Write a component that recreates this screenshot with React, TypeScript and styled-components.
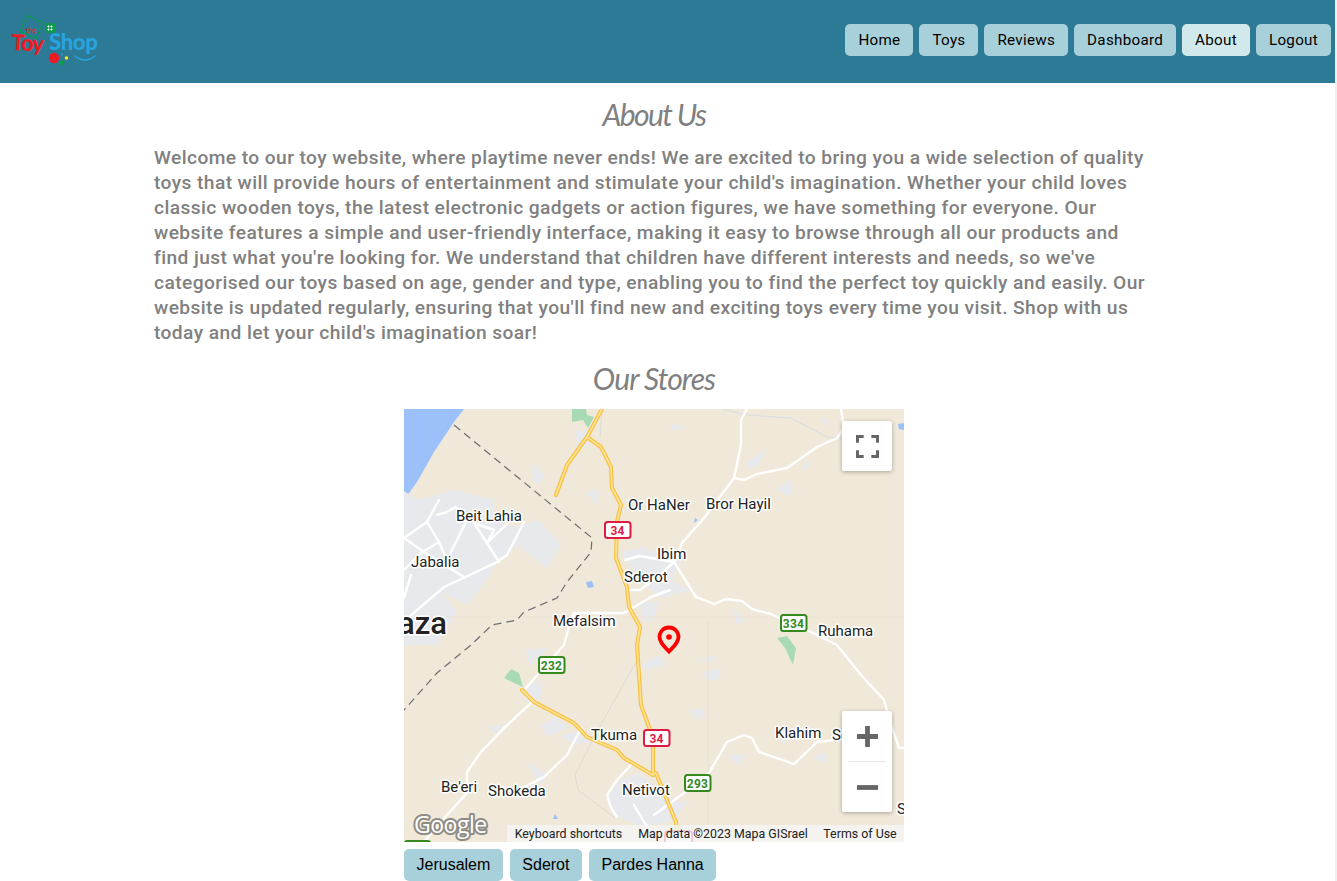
import { createGlobalStyle, styled } from 'styled-components'

const GlobalStyle = createGlobalStyle`
  html {
    background: #f1f1f1;
    overflow: hidden;
    height: 100%;
  }

  body {
    margin: 0;
    width: 1335px;
    height: 881px;
    overflow: hidden;
    background: #fff;
  }
`

const Header = styled.header`
  display: flex;
  align-items: center;
  justify-content: space-between;
  height: 83px;
  padding: 0 4px 0 8px;
  background: #2c7a96;
`

const Nav = styled.nav`
  display: flex;
  gap: 6px;
  margin-top: -3px;
`

const NavButton = styled.a<{ $active?: boolean }>`
  display: flex;
  align-items: center;
  height: 32px;
  padding: 0 13px;
  border-radius: 5px;
  background: ${(p) => (p.$active ? '#d2e9ec' : '#a8d0da')};
  color: #000;
  font: 400 15.2px Roboto, sans-serif;
  letter-spacing: 0.28px;
`

const Main = styled.main`
  display: flex;
  flex-direction: column;
  align-items: center;
  padding-right: 27px;
  color: #808080;
`

const Title = styled.h2<{ $spacing: number }>`
  margin: 11px 0 0;
  height: 40px;
  font: italic 400 30px/40px Lato, sans-serif;
  letter-spacing: ${(p) => p.$spacing}px;
`

const StoresTitle = styled(Title)`
  margin-top: 13px;
`

const Intro = styled.p`
  width: 1000px;
  margin: 11px 0 0;
  font: 500 19.2px/25px Roboto, sans-serif;
  letter-spacing: 0.41px;
`

const MapBox = styled.div`
  position: relative;
  width: 500px;
  height: 433px;
  margin-top: 11px;
  overflow: hidden;
  background: #f0e9d9;
`

const MapArt = styled.svg`
  display: block;
  width: 500px;
  height: 433px;
`

const MapControl = styled.div`
  position: absolute;
  right: 12px;
  display: flex;
  flex-direction: column;
  align-items: center;
  width: 50px;
  background: #fff;
  border-radius: 2px;
  box-shadow: 0 1px 4px rgba(0, 0, 0, 0.3);
`

const FullscreenControl = styled(MapControl)`
  top: 12px;
  height: 50px;
  justify-content: center;
`

const ZoomControl = styled(MapControl)`
  top: 302px;
  height: 101px;
`

const ZoomDivider = styled.div`
  width: 37px;
  height: 1px;
  background: #e6e6e6;
`

const ZoomButton = styled.div`
  display: flex;
  align-items: center;
  justify-content: center;
  width: 50px;
  height: 50px;
`

const Attribution = styled.div`
  position: absolute;
  right: 0;
  bottom: 0;
  display: flex;
  height: 17px;
  background: rgba(245, 245, 245, 0.75);
  color: #222;
  font: 12.4px/17px Roboto, sans-serif;
`

const AttributionItem = styled.span<{ $w: number }>`
  width: ${(p) => p.$w}px;
  text-align: center;
  white-space: nowrap;
`

const Stores = styled.div`
  display: flex;
  gap: 7px;
  width: 500px;
  margin-top: 7px;
`

const StoreButton = styled.button`
  height: 32px;
  padding: 0 12.5px;
  border: 0;
  border-radius: 5px;
  background: #a8d0da;
  color: #000;
  font: 16px "Liberation Sans", Arial, sans-serif;
`

const Label = styled.text<{ $size?: number; $weight?: number }>`
  font-family: Roboto, sans-serif;
  font-size: ${(p) => p.$size ?? 15}px;
  font-weight: ${(p) => p.$weight ?? 400};
  fill: #222;
  stroke: #fff;
  stroke-width: 3px;
  stroke-linejoin: round;
  paint-order: stroke;
`

const ShieldText = styled.text<{ $c: string }>`
  font-family: Roboto, sans-serif;
  font-size: 12px;
  font-weight: 700;
  letter-spacing: 0.2px;
  text-anchor: middle;
  fill: ${(p) => p.$c};
`

const GoogleMark = styled.text`
  font-family: "Open Sans", sans-serif;
  font-size: 23px;
  font-weight: 400;
  letter-spacing: -0.5px;
  fill: #fff;
  stroke: #8f8b85;
  stroke-width: 4px;
  stroke-linejoin: round;
  paint-order: stroke;
`

const LogoWord = styled.text<{ $c: string; $size: number; $spacing: number }>`
  font-family: Lato, sans-serif;
  font-size: ${(p) => p.$size}px;
  font-weight: 900;
  letter-spacing: ${(p) => p.$spacing}px;
  fill: ${(p) => p.$c};
`

const LogoTiny = styled.text`
  font-family: Lato, sans-serif;
  font-size: 7px;
  font-weight: 700;
  fill: #ed1c24;
`

const urban = [
  '404,491 418,500 453,490 494,500 494,518 514,527 539,520 561,545 547,568 517,545 497,562 481,588 467,605 441,592 457,612 437,645 404,645',
  '621,552 642,547 654,552 680,560 672,580 690,590 660,598 640,580',
  '607,796 620,780 638,773 654,785 682,805 668,822 640,826 615,815',
  '640,602 660,602 652,622 642,618',
]

const patches = [
  '532,462 544,476 539,485 533,480',
  '585,492 599,490 597,505',
  '575,431 590,430 590,447 578,447',
  '672,424 684,427 672,431',
  '747,462 767,449 757,466 748,469',
  '775,490 791,480 791,496',
  '801,470 810,458 808,469',
  '820,416 828,420 828,430',
  '732,608 745,620 736,624',
  '695,660 718,655 712,662',
  '730,697 746,688 731,696',
  '690,707 702,720 694,718',
  '727,755 746,755 737,765',
  '812,758 826,752 826,763',
  '525,650 548,648 530,666',
  '540,726 556,717 568,728 548,736',
  '560,736 580,730 592,742 575,745',
  '527,762 548,775 540,785',
  '490,727 503,724 494,735',
  '640,665 660,655 665,665 645,670',
  '704,672 720,668 718,680 706,680',
  '690,710 704,708 705,718',
  '775,735 782,722 786,745',
  '670,805 688,800 676,818',
  '520,690 540,680 542,695 528,704',
]

const whiteRoads = [
  'M674,562 696,597 714,604 726,599 742,601 752,609 771,614 787,622 811,632 837,645 861,675 884,700 891,725 899,748 904,748',
  'M674,562 682,543 704,518 734,478 741,445 741,420 747,409',
  'M734,478 744,480 757,474 787,468 817,447 837,438 844,428 841,409',
  'M654,815 684,793 709,773 727,742 744,735 752,738 759,752 794,764 817,742 844,739',
  'M564,645 539,673 526,688',
  'M564,645 570,622 574,613 604,613 624,613 651,597 670,590',
  'M532,702 504,728 481,752 467,772 467,793 447,815 424,842',
  'M579,732 567,755 544,777 524,787 505,790',
  'M631,765 617,780 607,795 611,808 617,817',
  'M634,805 644,822 650,830',
  'M625,560 640,556 674,562 660,575 640,590 627,590',
  'M439,500 427,522 404,538',
  'M427,522 439,542 421,553 404,570',
  'M439,542 447,560',
  'M437,515 447,512 456,507 467,520 447,560',
  'M474,523 494,530 487,543',
  'M474,523 487,543 499,562',
  'M524,522 507,555 497,562 474,573 444,587 417,610 404,622',
  'M404,538 424,552 464,577',
  'M411,575 404,598',
  'M487,543 507,524',
]

const mainHighways = [
  'M602,409 587,437 567,465 556,495',
  'M587,437 601,447 611,467 612,488 621,505 617,522 616,558 627,587 629,607 640,627 637,645 641,705 653,738 653,775 656,773 669,805 676,822 679,842',
  'M522,690 534,702 574,723 587,737 617,750 624,758 653,775',
]

const shields = [
  { x: 604, y: 521, label: '34', color: '#dd1c46' },
  { x: 643, y: 729, label: '34', color: '#dd1c46' },
  { x: 780, y: 614, label: '334', color: '#35891f' },
  { x: 538, y: 656, label: '232', color: '#35891f' },
  { x: 684, y: 774, label: '293', color: '#35891f' },
]

const labels = [
  { x: 456, y: 521, text: 'Beit Lahia' },
  { x: 411, y: 567, text: 'Jabalia' },
  { x: 628, y: 510, text: 'Or HaNer' },
  { x: 706, y: 509, text: 'Bror Hayil' },
  { x: 657, y: 559, text: 'Ibim' },
  { x: 624, y: 582, text: 'Sderot' },
  { x: 553, y: 626, text: 'Mefalsim' },
  { x: 818, y: 636, text: 'Ruhama' },
  { x: 591, y: 740, text: 'Tkuma' },
  { x: 775, y: 738, text: 'Klahim' },
  { x: 832, y: 740, text: 'Se' },
  { x: 441, y: 792, text: "Be'eri" },
  { x: 488, y: 796, text: 'Shokeda' },
  { x: 622, y: 795, text: 'Netivot' },
  { x: 897, y: 814, text: 'S' },
]

const Logo = () => (
  <svg width="92" height="60" viewBox="8 12 92 60">
    <g transform="rotate(23 31.5 27)">
      <rect x="22.700" y="18.200" width="17.600" height="17.600" fill="none" stroke="#0c9a4e" strokeWidth="1.200" />
    </g>
    <LogoTiny x="26" y="33">the</LogoTiny>
    <rect x="45.500" y="23" width="10" height="10" rx="2" fill="#0c9a4e" />
    <path d="M48 26h1v1h-1zM51 26h1v1h-1zM48 29h1v1h-1zM51 29h1v1h-1z" fill="#fff" stroke="#fff" />
    <LogoWord x="11" y="50" $c="#ed1c24" $size={22} $spacing={-1} transform="rotate(3 11 50)">
      Toy
    </LogoWord>
    <LogoWord x="49" y="50" $c="#29a3df" $size={22} $spacing={-0.3}>
      Shop
    </LogoWord>
    <circle cx="54" cy="58" r="5.200" fill="#ed1c24" />
    <circle cx="62" cy="63" r="2.600" fill="#0c9a4e" />
    <circle cx="66.500" cy="58" r="1.800" fill="#f7ec13" />
    <circle cx="62" cy="54.500" r="1" fill="#29a3df" />
    <path d="M75 56q10 8 20 0" fill="none" stroke="#29a3df" strokeWidth="1.600" strokeLinecap="round" />
  </svg>
)

const StreetMap = () => (
  <MapArt viewBox="404 409 500 433">
    <rect x="404" y="409" width="500" height="433" fill="#f0e9d9" />
    <path d="M404,409H464L454,422 434,452 417,482 404,500Z" fill="#9cc0f9" />
    {urban.map((points) => (
      <polygon key={points} points={points} fill="#e8e9ed" />
    ))}
    {patches.map((points) => (
      <polygon key={points} points={points} fill="#e8e9ed" />
    ))}
    <path d="M572,409H586L587,415 594,417 588,428 583,420 572,422Z" fill="#a8dab5" />
    <path d="M504,678 511,669 519,673 523,687 514,683Z" fill="#a8dab5" />
    <path d="M777,638 787,636 796,648 793,665 785,648Z" fill="#a8dab5" />
    <path d="M586,582 592,581 594,587 588,588Z" fill="#9cc0f9" />
    <path d="M695,518 698,520 694,523Z" fill="#9cc0f9" />
    <path d="M555,814 558,819 553,819Z" fill="#9cc0f9" />
    <path d="M898,424 904,423 904,430 899,429Z" fill="#9cc0f9" />
    <path d="M722,409 747,415 791,418 827,437 842,438" fill="none" stroke="#d6dde3" strokeWidth="1" />
    <path d="M640,655 595,735 575,775 578,790 615,818" fill="none" stroke="#dadbd7" strokeWidth="1" />
    <path d="M602,409 600,437" fill="none" stroke="#dadbd7" strokeWidth="1" />
    <path d="M708,620V825" fill="none" stroke="#e8e2d2" strokeWidth="1" />
    <path d="M404,617H904" fill="none" stroke="#ece5d5" strokeWidth="1" />
    {whiteRoads.map((d) => (
      <path key={d} d={d} fill="none" stroke="#fff" strokeWidth="2.400" strokeLinejoin="round" strokeLinecap="round" />
    ))}
    {mainHighways.map((d) => (
      <path key={d} d={d} fill="none" stroke="#f9bf3a" strokeWidth="4" strokeLinejoin="round" strokeLinecap="round" />
    ))}
    {mainHighways.map((d) => (
      <path key={d + 'in'} d={d} fill="none" stroke="#fde293" strokeWidth="1.800" strokeLinejoin="round" strokeLinecap="round" />
    ))}
    <path
      d="M454,425 592,538 591,552 567,582 557,598 524,612 517,620 492,625 471,645 437,673 404,710"
      fill="none"
      stroke="#6d6d70"
      strokeWidth="1.200"
      strokeDasharray="8 5"
    />
    {labels.map((l) => (
      <Label key={l.text} x={l.x} y={l.y}>
        {l.text}
      </Label>
    ))}
    <Label x="398" y="634" $size={31} $weight={500}>
      aza
    </Label>
    {shields.map((s) => (
      <g key={s.x}>
        <rect x={s.x + 1} y={s.y + 1} width="25.500" height="16" rx="2.500" fill="#fff" stroke={s.color} strokeWidth="2" />
        <ShieldText x={s.x + 13.5} y={s.y + 13.5} $c={s.color}>
          {s.label}
        </ShieldText>
      </g>
    ))}
    <rect x="404" y="840" width="27" height="12" rx="3" fill="#35891f" />
    <rect x="665" y="831" width="27" height="16" rx="3" fill="#fff" stroke="#dd1c46" strokeWidth="1.600" />
    <path
      d="M669,627.500c-5.300,0-9.500,4.200-9.500,9.500 0,5.800 5.500,10.500 9.500,14.500 4,-4 9.500,-8.700 9.500,-14.500 0,-5.300 -4.200,-9.500 -9.500,-9.500z"
      fill="#f0e9d9"
      stroke="#ff0000"
      strokeWidth="3.800"
    />
    <circle cx="669" cy="637" r="2.800" fill="#ff0000" />
    <GoogleMark x="414" y="833">Google</GoogleMark>
  </MapArt>
)

const intro =
  "Welcome to our toy website, where playtime never ends! We are excited to bring you a wide selection of quality toys that will provide hours of entertainment and stimulate your child's imagination. Whether your child loves classic wooden toys, the latest electronic gadgets or action figures, we have something for everyone. Our website features a simple and user-friendly interface, making it easy to browse through all our products and find just what you're looking for. We understand that children have different interests and needs, so we've categorised our toys based on age, gender and type, enabling you to find the perfect toy quickly and easily. Our website is updated regularly, ensuring that you'll find new and exciting toys every time you visit. Shop with us today and let your child's imagination soar!"

const navItems = ['Home', 'Toys', 'Reviews', 'Dashboard', 'About', 'Logout']
const stores = ['Jerusalem', 'Sderot', 'Pardes Hanna']

export default function App() {
  return (
    <>
      <GlobalStyle />
      <Header>
        <Logo />
        <Nav>
          {navItems.map((item) => (
            <NavButton key={item} $active={item === 'About'}>
              {item}
            </NavButton>
          ))}
        </Nav>
      </Header>
      <Main>
        <Title $spacing={-1.6}>About Us</Title>
        <Intro>{intro}</Intro>
        <StoresTitle $spacing={-0.9}>Our Stores</StoresTitle>
        <MapBox>
          <StreetMap />
          <FullscreenControl>
            <svg width="23" height="23" viewBox="0 0 24 24" fill="none" stroke="#666" strokeWidth="3.200">
              <path d="M1.500 8V1.500H8M16 1.500H22.500V8M22.500 16V22.500H16M8 22.500H1.500V16" />
            </svg>
          </FullscreenControl>
          <ZoomControl>
            <ZoomButton>
              <svg width="23" height="23" viewBox="0 0 24 24" fill="#666">
                <path d="M9.500 1h5v8.500H23v5h-8.500V23h-5v-8.500H1v-5h8.500z" />
              </svg>
            </ZoomButton>
            <ZoomDivider />
            <ZoomButton>
              <svg width="23" height="23" viewBox="0 0 24 24" fill="#666">
                <path d="M1 9.500h22v5H1z" />
              </svg>
            </ZoomButton>
          </ZoomControl>
          <Attribution>
            <AttributionItem $w={123}>Keyboard shortcuts</AttributionItem>
            <AttributionItem $w={186}>Map data ©2023 Mapa GISrael</AttributionItem>
            <AttributionItem $w={88}>Terms of Use</AttributionItem>
          </Attribution>
        </MapBox>
        <Stores>
          {stores.map((store) => (
            <StoreButton key={store}>{store}</StoreButton>
          ))}
        </Stores>
      </Main>
    </>
  )
}
